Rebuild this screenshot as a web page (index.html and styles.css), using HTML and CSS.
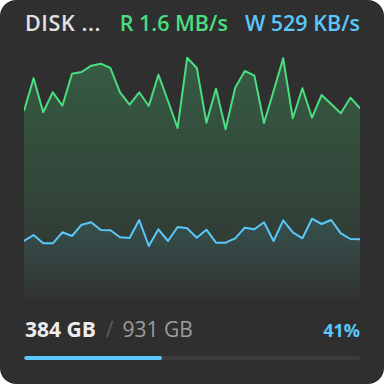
FILE: index.html
```html
<!DOCTYPE html>
<html>
<head>
<meta charset="utf-8">
<link rel="stylesheet" href="styles.css">
</head>
<body>
<div class="card">
  <div class="header">
    <span class="title">DISK ...</span>
    <span class="read">R 1.6 MB/s</span>
    <span class="write">W 529 KB/s</span>
  </div>
  <div class="chart">
    <svg width="336" height="260" viewBox="0 0 336 260">
      <defs>
        <linearGradient id="gfill" x1="0" y1="0" x2="0" y2="1">
          <stop offset="0" stop-color="#4ade80" stop-opacity="0.26"/>
          <stop offset="1" stop-color="#4ade80" stop-opacity="0.02"/>
        </linearGradient>
        <linearGradient id="bfill" x1="0" y1="0" x2="0" y2="1">
          <stop offset="0" stop-color="#5ac8fa" stop-opacity="0.12"/>
          <stop offset="1" stop-color="#5ac8fa" stop-opacity="0"/>
        </linearGradient>
      </defs>
      <polygon fill="url(#gfill)" points="0,260 0,71 9.6,38.3 19.2,72.3 28.8,52.3 38.4,65.7 48,33.7 57.6,32 67.2,25.7 76.8,23.7 86.4,28 96,52.3 105.6,64.7 115.2,52.3 124.8,66 134.4,34.7 144,61 153.6,88 163.2,17.7 172.8,28 182.4,82.7 192,48.7 201.6,89.3 211.2,47.7 220.8,31 230.4,35.7 240,83 249.6,51 259.2,18.3 268.8,78.3 278.4,48.3 288,77.7 297.6,55 307.2,64 316.8,73.3 326.4,57.7 336,68.3 336,260"/>
      <polygon fill="url(#bfill)" points="0,260 0,201 9.6,195 19.2,203.3 28.8,203.3 38.4,192.3 48,196 57.6,184.7 67.2,182.3 76.8,190 86.4,190.3 96,197.3 105.6,198 115.2,180 124.8,206 134.4,189.3 144,201 153.6,187 163.2,188.3 172.8,197.7 182.4,189.7 192,202.7 201.6,202.7 211.2,198.3 220.8,187.7 230.4,189.3 240,182.3 249.6,201 259.2,180.3 268.8,192.3 278.4,198.3 288,178.7 297.6,184 307.2,180 316.8,193.3 326.4,199 336,199.3 336,260"/>
      <polyline class="gline" points="0,71 9.6,38.3 19.2,72.3 28.8,52.3 38.4,65.7 48,33.7 57.6,32 67.2,25.7 76.8,23.7 86.4,28 96,52.3 105.6,64.7 115.2,52.3 124.8,66 134.4,34.7 144,61 153.6,88 163.2,17.7 172.8,28 182.4,82.7 192,48.7 201.6,89.3 211.2,47.7 220.8,31 230.4,35.7 240,83 249.6,51 259.2,18.3 268.8,78.3 278.4,48.3 288,77.7 297.6,55 307.2,64 316.8,73.3 326.4,57.7 336,68.3"/>
      <polyline class="bline" points="0,201 9.6,195 19.2,203.3 28.8,203.3 38.4,192.3 48,196 57.6,184.7 67.2,182.3 76.8,190 86.4,190.3 96,197.3 105.6,198 115.2,180 124.8,206 134.4,189.3 144,201 153.6,187 163.2,188.3 172.8,197.7 182.4,189.7 192,202.7 201.6,202.7 211.2,198.3 220.8,187.7 230.4,189.3 240,182.3 249.6,201 259.2,180.3 268.8,192.3 278.4,198.3 288,178.7 297.6,184 307.2,180 316.8,193.3 326.4,199 336,199.3"/>
    </svg>
  </div>
  <div class="footer">
    <div class="usage">
      <span class="used">384 GB</span>
      <span class="sep">/</span>
      <span class="total">931 GB</span>
      <span class="pct">41%</span>
    </div>
    <div class="bar"><div class="fill" style="width:41%"></div></div>
  </div>
</div>
</body>
</html>
```
FILE: styles.css
```css
html, body {
  margin: 0;
  padding: 0;
  background: #ffffff;
}
.card {
  width: 384px;
  height: 384px;
  box-sizing: border-box;
  background: #2f2f2f;
  border-radius: 16px;
  padding: 8px 24px 0 24px;
  display: flex;
  flex-direction: column;
  font-family: "Open Sans", "Noto Sans", sans-serif;
}
.header {
  display: flex;
  align-items: baseline;
  height: 30px;
  font-size: 21.5px;
  font-weight: 600;
  white-space: nowrap;
}
.title {
  color: #e2e2e2;
  margin-left: 1px;
  letter-spacing: 0.6px;
}
.read {
  color: #4ade80;
  margin-left: auto;
  margin-right: 17px;
}
.write {
  color: #5ac8fa;
}
.chart {
  height: 260px;
  margin-top: 2px;
}
.chart svg {
  display: block;
}
.gline, .bline {
  fill: none;
  stroke-width: 2;
  stroke-linejoin: round;
}
.gline { stroke: #4ade80; }
.bline { stroke: #5ac8fa; }
.footer {
  padding-top: 15px;
}
.usage {
  display: flex;
  align-items: baseline;
  white-space: nowrap;
}
.used {
  color: #ececec;
  font-size: 21px;
  font-weight: 700;
  margin-left: 1px;
}
.sep {
  color: #5e5e5e;
  font-size: 21px;
  margin: 0 9px 0 10px;
}
.total {
  color: #9c9c9c;
  font-size: 21px;
}
.pct {
  margin-left: auto;
  color: #5ac8fa;
  font-size: 18px;
  font-weight: 700;
}
.bar {
  margin-top: 13px;
  height: 4px;
  background: #3c3c3c;
  border-radius: 2px;
  overflow: hidden;
}
.fill {
  height: 100%;
  background: #5ac8fa;
  border-radius: 2px;
}
```
